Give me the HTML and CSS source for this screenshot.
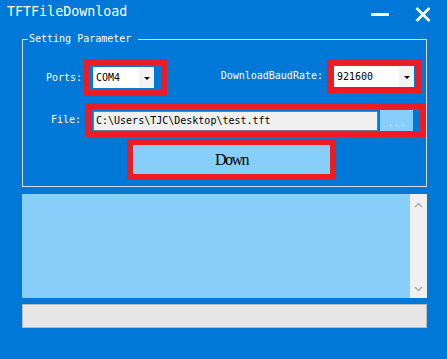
FILE: index.html
```html
<!DOCTYPE html>
<html lang="en">
<head>
    <meta charset="UTF-8">
    <meta name="viewport" content="width=device-width, initial-scale=1.0">
    <title>TFTFileDownload</title>
    <link rel="stylesheet" href="styles.css">
</head>
<body>
    <div class="window">
        <header class="titlebar">
            <span class="title">TFTFileDownload</span>
            <div class="window-controls">
                <svg class="ctl-min" width="18" height="3" viewBox="0 0 18 3"><rect width="18" height="3" fill="#fff"/></svg>
                <svg class="ctl-close" width="16" height="15" viewBox="0 0 16 15"><path d="M1.5 1 L14.5 14 M14.5 1 L1.5 14" stroke="#fff" stroke-width="2.6" fill="none"/></svg>
            </div>
        </header>

        <fieldset class="group">
            <legend>Setting Parameter</legend>

            <div class="row row-ports">
                <div class="field-group">
                    <label class="label label-fixed">Ports:</label>
                    <div class="mark mark-ports">
                        <div class="combo combo-ports">
                            <span class="combo-value">COM4</span>
                            <span class="combo-drop"><i class="arrow"></i></span>
                        </div>
                    </div>
                </div>
                <div class="field-group">
                    <label class="label">DownloadBaudRate:</label>
                    <div class="mark mark-baud">
                        <div class="combo combo-baud">
                            <span class="combo-value">921600</span>
                            <span class="combo-drop"><i class="arrow"></i></span>
                        </div>
                    </div>
                </div>
            </div>

            <div class="row row-file">
                <label class="label label-fixed">File:</label>
                <div class="mark mark-file">
                    <div class="file-input">C:\Users\TJC\Desktop\test.tft</div>
                    <button class="browse-btn">...</button>
                </div>
            </div>

            <div class="row row-down">
                <div class="mark mark-down">
                    <button class="down-btn">Down</button>
                </div>
            </div>
        </fieldset>

        <div class="log">
            <div class="log-body"></div>
            <div class="scrollbar">
                <svg width="9" height="6" viewBox="0 0 9 6"><path d="M1 5 L4.5 1.5 L8 5" stroke="#a8a8a8" stroke-width="1.4" fill="none"/></svg>
                <svg width="9" height="6" viewBox="0 0 9 6"><path d="M1 1 L4.5 4.5 L8 1" stroke="#a8a8a8" stroke-width="1.4" fill="none"/></svg>
            </div>
        </div>

        <div class="progress"></div>
    </div>
</body>
</html>
```

FILE: styles.css
```css
:root {
    --win-blue: #0078d7;
    --light-blue: #87cefa;
    --mark-red: #ed1c24;
    --group-line: #d9dde3;
}

* {
    margin: 0;
    padding: 0;
    box-sizing: border-box;
}

body {
    font-family: 'DejaVu Sans Mono', monospace;
    font-size: 10px;
    line-height: 12px;
    background: var(--win-blue);
    color: #fff;
    width: 447px;
    height: 359px;
    overflow: hidden;
}

.titlebar {
    height: 33px;
    display: flex;
    justify-content: space-between;
    align-items: flex-start;
    padding: 4px 16px 0 7px;
}

.title {
    font-size: 13.33px;
    line-height: 16px;
}

.window-controls {
    display: flex;
    align-items: flex-start;
    gap: 26px;
}

.ctl-min {
    margin-top: 9px;
}

.ctl-close {
    margin-top: 3px;
}

.group {
    margin: 0 20px 0 22px;
    border: 1px solid var(--group-line);
    padding: 0 0 6px;
    min-width: 0;
}

.group legend {
    margin-left: 5px;
    padding: 0 7px 0 1px;
    line-height: 12px;
}

.row {
    display: flex;
    align-items: center;
}

.row-ports {
    margin-top: 14px;
    margin-right: 5px;
    justify-content: space-between;
    align-items: flex-start;
}

.field-group {
    display: flex;
    align-items: center;
    gap: 4px;
}

.label {
    white-space: nowrap;
}

.label-fixed {
    width: 59px;
    text-align: right;
}

.field-group:first-child {
    gap: 2px;
}

.mark {
    border: 6px solid var(--mark-red);
    flex-shrink: 0;
}

.mark-ports {
    padding: 2px 7px 2px 3px;
}

.mark-baud {
    padding: 1px 1px 0 1px;
}

.combo {
    height: 21px;
    background: #fff;
    color: #000;
    display: flex;
    align-items: center;
}

.combo-ports {
    width: 61px;
}

.combo-baud {
    width: 80px;
}

.combo-value {
    flex: 1;
    padding-left: 3px;
}

.combo-drop {
    width: 15px;
    height: 100%;
    background: #f3f3f3;
    display: flex;
    align-items: center;
    justify-content: center;
}

.arrow {
    width: 0;
    height: 0;
    border-left: 3px solid transparent;
    border-right: 3px solid transparent;
    border-top: 3px solid #000;
    margin-top: 2px;
}

.row-file {
    margin-top: 7px;
}

.mark-file {
    margin-left: 4px;
    padding: 2px 7px 0 2px;
    display: flex;
    gap: 2px;
}

.file-input {
    width: 285px;
    height: 20px;
    background: #f0f0f0;
    border: 1px solid #7a7a7a;
    color: #000;
    padding-left: 2px;
    line-height: 18px;
}

.browse-btn {
    width: 33px;
    height: 21px;
    margin-top: -1px;
    background: var(--light-blue);
    border: none;
    color: #d4ecfb;
    font-family: inherit;
    font-size: 10px;
    padding-top: 4px;
}

.row-down {
    margin-top: 2px;
}

.mark-down {
    margin-left: 104px;
}

.down-btn {
    display: block;
    width: 197px;
    height: 29px;
    background: var(--light-blue);
    border: none;
    color: #000;
    font-family: 'Liberation Serif', serif;
    font-size: 16px;
    letter-spacing: -1.5px;
}

.log {
    margin: 7px 20px 0 22px;
    height: 104px;
    display: flex;
}

.log-body {
    flex: 1;
    background: var(--light-blue);
}

.scrollbar {
    width: 17px;
    background: #f0f0f0;
    display: flex;
    flex-direction: column;
    justify-content: space-between;
    align-items: center;
    padding: 8px 0 6px;
}

.progress {
    margin: 6px 20px 0 22px;
    height: 24px;
    background: #e6e6e6;
    border: 1px solid #bcbcbc;
}
```
